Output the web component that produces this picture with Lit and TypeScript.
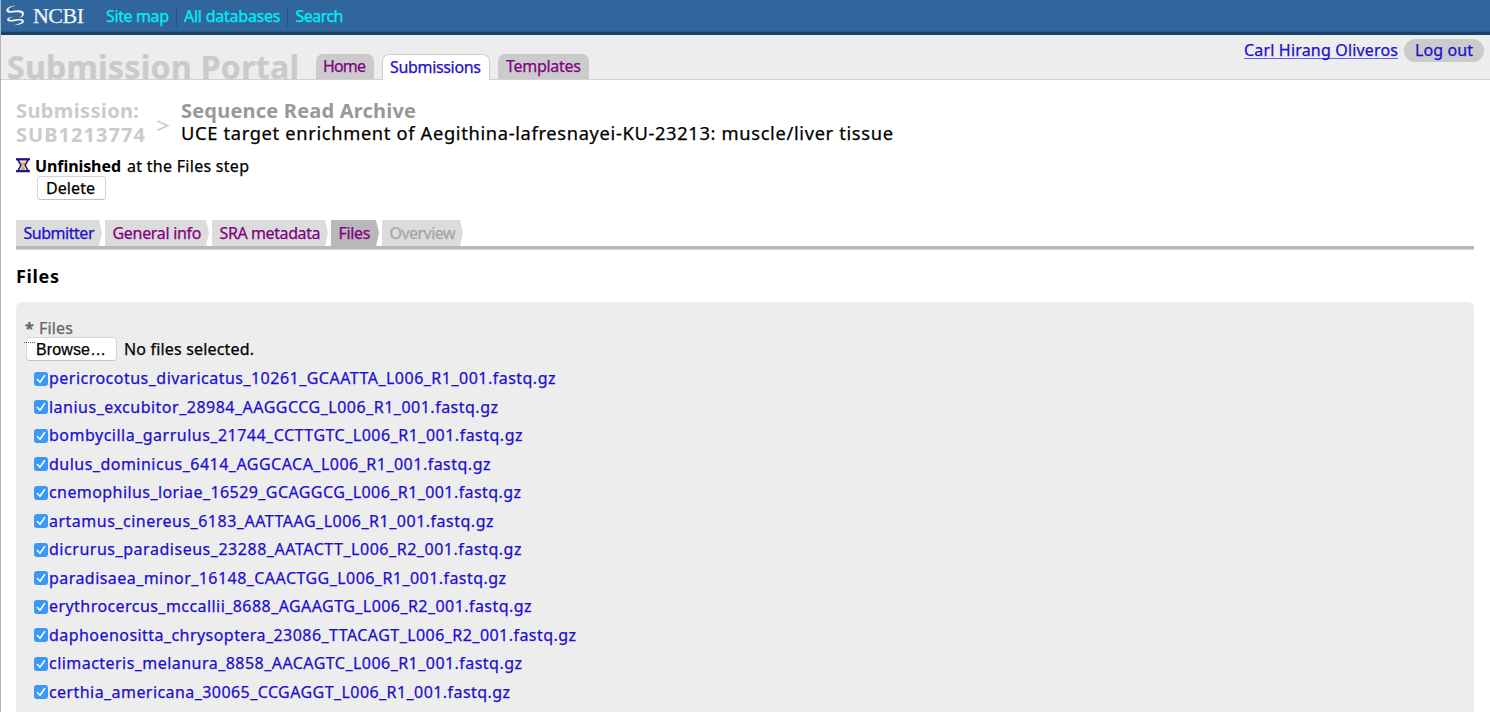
import { LitElement, html, css } from "lit";
import { customElement, property } from "lit/decorators.js";

// A single line of text tracked out or in so that it fills a given width.
@customElement("fit-text")
class FitText extends LitElement {
  static styles = css`
    :host { display: inline-block; white-space: pre; text-decoration: inherit; }
    .t { display: inline-block; white-space: pre; }
  `;
  @property({ type: Number }) w = 0;
  @property() text = "";

  firstUpdated() {
    this.fit();
    document.fonts.ready.then(() => this.fit());
  }

  fit() {
    const span = this.renderRoot.querySelector(".t") as HTMLElement;
    span.style.letterSpacing = "0px";
    const natural = span.getBoundingClientRect().width;
    const gap = (this.w - natural) / Math.max(1, this.text.length - 1);
    span.style.letterSpacing = gap.toFixed(3) + "px";
    span.style.marginRight = (-gap).toFixed(3) + "px";
  }

  render() {
    return html`<span class="t">${this.text}</span>`;
  }
}

const fit = (text: string, w: number) => html`<fit-text .text=${text} .w=${w}></fit-text>`;

const files: [string, number][] = [
  ["pericrocotus_divaricatus_10261_GCAATTA_L006_R1_001.fastq.gz", 506.5],
  ["lanius_excubitor_28984_AAGGCCG_L006_R1_001.fastq.gz", 449],
  ["bombycilla_garrulus_21744_CCTTGTC_L006_R1_001.fastq.gz", 473.5],
  ["dulus_dominicus_6414_AGGCACA_L006_R1_001.fastq.gz", 441.5],
  ["cnemophilus_loriae_16529_GCAGGCG_L006_R1_001.fastq.gz", 472],
  ["artamus_cinereus_6183_AATTAAG_L006_R1_001.fastq.gz", 444.5],
  ["dicrurus_paradiseus_23288_AATACTT_L006_R2_001.fastq.gz", 472.5],
  ["paradisaea_minor_16148_CAACTGG_L006_R1_001.fastq.gz", 457],
  ["erythrocercus_mccallii_8688_AGAAGTG_L006_R2_001.fastq.gz", 482.5],
  ["daphoenositta_chrysoptera_23086_TTACAGT_L006_R2_001.fastq.gz", 527],
  ["climacteris_melanura_8858_AACAGTC_L006_R1_001.fastq.gz", 473],
  ["certhia_americana_30065_CCGAGGT_L006_R1_001.fastq.gz", 461],
];

const steps: [string, number, number, string][] = [
  ["Submitter", 71, 79, "blue"],
  ["General info", 89, 97, ""],
  ["SRA metadata", 101, 109, ""],
  ["Files", 32, 41, "active"],
  ["Overview", 66, 74, "off"],
];

@customElement("app-root")
class AppRoot extends LitElement {
  static styles = css`
    :host {
      display: block; box-sizing: border-box; width: 100%; height: 712px; overflow: hidden;
      font: 16px/22px "Noto Sans", "Open Sans", sans-serif;
      color: #000; background: #fff; -webkit-text-stroke: .25px currentColor;
    }
    * { box-sizing: border-box; }
    .page { height: 712px; overflow: hidden; border-left: 1px solid #b4b4b4; }
    a { color: #1c0dd0; text-decoration: none; white-space: nowrap; }
    svg { display: block; flex: none; }

    .bar { height: 35px; margin-left: -1px; background: #31669c; border-bottom: 3px solid #1a4068;
      display: flex; align-items: flex-start; padding-left: 6px; box-shadow: inset 0 -1px #2b5a8c; }
    .bar .mark { margin-top: 5px; }
    .brand { font: 22px/24px "Liberation Serif", serif; color: #eef3f8; margin: 4px 0 0 8px; width: 52px; }
    .links { display: flex; margin: 5px 0 0 21px; }
    .links a { display: flex; color: #00f0fa; padding-right: 7px; height: 18px; margin-top: 3px; }
    .links a + a { padding-left: 7px; border-left: 1px solid #24527f; }
    .links fit-text { line-height: 16px; }

    .head { height: 45px; background: #ededed; border-bottom: 1px solid #d2d2d2; display: flex; align-items: flex-end; padding-left: 6px; }
    .title { font-weight: 700; font-size: 32px; line-height: 42px; height: 34px; width: 292px; color: #cacaca; margin-bottom: -1px; }
    .tabs { display: flex; align-items: flex-end; gap: 8px; margin-left: 17px; }
    .tab { height: 25px; background: #cbcbcb; border-radius: 7px 7px 0 0; padding: 1px 8px 0 7px; color: #800080; }
    .tab.on { height: 26px; margin-bottom: -1px; background: #fff; border: 1px solid #cfcfcf; border-bottom: 0; color: #1c0dd0; padding-top: 1px; }
    .tab.last { padding-left: 8px; }
    .user { align-self: flex-start; display: flex; gap: 6px; margin: 3px 6px 0 auto; padding-top: 1px; }
    .user .name { display: flex; height: 24px; }
    .user .name fit-text { border-bottom: 1px solid #6a5fe6; height: 20px; line-height: 22px; }
    .pill { height: 23px; line-height: 22px; background: #cbcbcb; border-radius: 12px; width: 80px; padding-left: 11px; }

    .main { padding: 0 16px 0 15px; }
    .crumbs { display: flex; height: 74px; padding-top: 18px; font-size: 20px; line-height: 26px; font-weight: 700; }
    .sub { width: 141px; color: #cbcbcb; }
    .sub, .what { -webkit-text-stroke-width: 0; }
    .sub div, .what div { height: 24px; }
    .gt { width: 24px; padding-top: 22px; }
    .what { color: #999; }
    .what .desc { font-size: 18.3px; font-weight: 400; color: #000; line-height: 22px; -webkit-text-stroke-width: .25px; }
    .state { display: flex; height: 22px; margin-top: 1px; }
    .state svg { margin: 3px 5px 0 0; }
    .state b { margin-right: 6px; -webkit-text-stroke-width: 0; }
    .btn { display: flex; background: #fff; border: 1px solid #d6d6d6; border-bottom-color: #c2c2c2; border-radius: 4px; }
    .delete { width: 69px; height: 24px; margin: -1px 0 0 21px; padding-left: 8px; line-height: 23px; }

    .steps { display: flex; gap: 3px; margin-top: 20px; height: 29px; border-bottom: 3px solid #b8b8b8; box-shadow: 0 1px #d4d4d4; }
    .step { height: 26px; display: flex; }
    .step fit-text { padding-left: 7.5px; line-height: 26px; }
    .step a { display: block; background: #dcdcdc; height: 26px; color: #800080; }
    .step.blue a { color: #1c0dd0; }
    .step.active a { background: #b8b8b8; }
    .step.off a { color: #a6a6a6; }
    h2 { font-size: 18px; line-height: 24px; margin: 15px 0 0; height: 38px; -webkit-text-stroke-width: 0; }

    .panel { background: #ededed; border-radius: 6px; height: 430px; padding: 15px 9px 0 8px; }
    .label { height: 20px; line-height: 22px; display: flex; gap: 6px; color: #666; padding-left: 1px; }
    .label b { width: 8px; }
    .dots { height: 1px; width: 11px; border-top: 1px dotted #555; margin: 5px 0 -6px; position: relative; z-index: 1; }
    .pick { display: flex; gap: 8px; }
    .browse { width: 91px; height: 24px; margin-left: 2px; padding-left: 9px; font-family: "Liberation Sans", sans-serif; line-height: 23px; }
    .pick .none { line-height: 25px; margin-left: -1px; }
    .list { margin: 2px 0 0 10px; }
    .row { height: 28.5px; display: flex; align-items: center; }
    .row a { display: flex; line-height: 29px; height: 28px; }
    .row svg { margin: 1px 1px 0 0; }
  `;

  render() {
    return html`<div class="page">
      <div class="bar">
        <svg class="mark" width="19" height="21" viewBox="0 0 19 21" fill="#eef3f8">
          <path d="M9.5 .8C3.5 .6-.6 3.6 .5 6.2C1.6 8.6 6 7.6 10 7.2C13.5 7 16 7.6 16 9.6C16 11 14.8 12 13.2 12.9C16 12.3 18.2 10.6 18 8.4C17.6 5.4 13 5 9 5.6C5.6 6.2 2.8 6.4 2.6 4.8C2.5 3.2 5.6 1.8 9.5 .8Z"/>
          <path d="M8.5 11.6C3.6 11.8 .6 13.4 1.2 15.2C1.9 17 6 16.6 9.6 15.9C13 15.3 15.6 15.3 15.7 16.5C15.8 17.8 12.6 18.8 8 19.8C13.4 20.2 18.2 18.6 17.9 15.9C17.6 13.6 13.4 13.6 9.4 14.3C6 14.9 3.4 15.2 3.2 14.2C3 13.2 5.2 12.2 8.5 11.6Z"/>
        </svg>
        <div class="brand">${fit("NCBI", 51)}</div>
        <div class="links">
          <a href="#">${fit("Site map", 63)}</a>
          <a href="#">${fit("All databases", 96.5)}</a>
          <a href="#">${fit("Search", 48)}</a>
        </div>
      </div>
      <div class="head">
        <div class="title">${fit("Submission Portal", 292)}</div>
        <div class="tabs">
          <a class="tab" href="#">${fit("Home", 43)}</a>
          <a class="tab on" href="#">${fit("Submissions", 91)}</a>
          <a class="tab last" href="#">${fit("Templates", 75)}</a>
        </div>
        <div class="user">
          <a class="name" href="#">${fit("Carl Hirang Oliveros", 154)}</a>
          <a class="pill" href="#">${fit("Log out", 58)}</a>
        </div>
      </div>
      <div class="main">
        <div class="crumbs">
          <div class="sub"><div>${fit("Submission:", 123)}</div><div>${fit("SUB1213774", 129)}</div></div>
          <div class="gt"><svg width="12" height="12" viewBox="0 0 12 12" fill="none" stroke="#cbcbcb" stroke-width="1.8"><path d="M.5 1L10.8 5.6L.5 10.3"/></svg></div>
          <div class="what">
            <div>${fit("Sequence Read Archive", 235)}</div>
            <div class="desc">${fit("UCE target enrichment of Aegithina-lafresnayei-KU-23213: muscle/liver tissue", 712)}</div>
          </div>
        </div>
        <div class="state">
          <svg width="14" height="15" viewBox="0 0 14 15">
            <path d="M1.6 1.5H12.4L9 7.3L12.4 13H1.6L5 7.3Z" fill="#fae6d4" stroke="#12128c" stroke-width="1.5"/>
            <path d="M4.4 4.6H9.6L7 8ZM7 7.6L9.6 11.8H4.4Z" fill="#ee9a50"/>
            <path d="M0 1.3H14M0 13.2H14" stroke="#12128c" stroke-width="2"/>
          </svg>
          <b>${fit("Unfinished", 86)}</b>${fit("at the Files step", 122)}
        </div>
        <div class="btn delete">${fit("Delete", 49)}</div>
        <div class="steps">
          ${steps.map(([name, w, box, kind]) => html`<div class="step ${kind}">
            <a href="#" style="width:${box}px">${fit(name, w)}</a>
            <svg width="7" height="26" viewBox="0 0 7 26"><path d="M0 0H4L7 13L4 26H0Z" fill=${kind === "active" ? "#b8b8b8" : "#dcdcdc"}/></svg>
          </div>`)}
        </div>
        <h2>${fit("Files", 43)}</h2>
        <div class="panel">
          <div class="label"><b>*</b>${fit("Files", 34)}</div>
          <div class="dots"></div>
          <div class="pick">
            <div class="btn browse">${fit("Browse…", 70)}</div>
            <div class="none">${fit("No files selected.", 130)}</div>
          </div>
          <div class="list">
            ${files.map(([name, w]) => html`<div class="row">
              <svg width="14" height="14" viewBox="0 0 14 14"><rect width="14" height="14" rx="3" fill="#3a98f8"/><path d="M3.4 7.5L6 10.3L10.6 3.6" fill="none" stroke="#fff" stroke-width="1.6" stroke-linecap="round" stroke-linejoin="round"/></svg>
              <a href="#">${fit(name, w)}</a>
            </div>`)}
          </div>
        </div>
      </div>
    </div>`;
  }
}
